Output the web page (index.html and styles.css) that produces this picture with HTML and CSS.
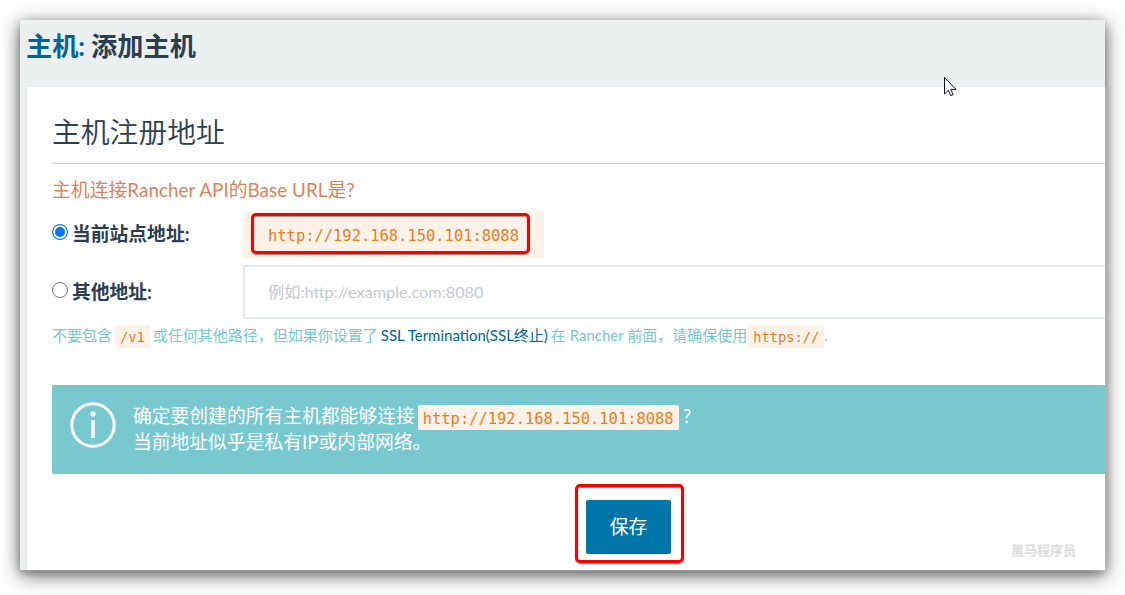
FILE: index.html
```html
<!DOCTYPE html>
<html lang="zh-CN">
<head>
<meta charset="utf-8">
<title>添加主机</title>
<link rel="stylesheet" href="styles.css">
</head>
<body>
<main class="window">
  <h1 class="page-title"><a class="crumb">主机:</a> 添加主机</h1>
  <section class="card">
    <h2 class="heading">主机注册地址</h2>
    <p class="question">主机连接Rancher API的Base URL是?</p>
    <div class="option option-current">
      <label class="choice"><span class="radio radio-on"></span><span class="choice-text">当前站点地址:</span></label>
      <div class="current-url"><code class="url">http://192.168.150.101:8088</code><span class="mark mark-url"></span></div>
    </div>
    <div class="option option-other">
      <label class="choice"><span class="radio"></span><span class="choice-text">其他地址:</span></label>
      <div class="field"><span class="placeholder">例如:http://example.com:8080</span></div>
    </div>
    <p class="hint"><span>不要包含</span><code class="chip chip-path">/v1</code><span>或任何其他路径，但如果你设置了</span><a class="link">SSL Termination(SSL终止)</a><span class="hint-tail">在 Rancher 前面，请确保使用</span><code class="chip chip-https">https://</code><span>.</span></p>
    <div class="notice">
      <svg class="info" viewBox="0 0 46 46" width="46" height="46"><circle cx="23" cy="23" r="21.2" fill="none" stroke="#fff" stroke-width="3"/><circle cx="23" cy="12" r="2.7" fill="#fff"/><path d="M23 18v18" stroke="#fff" stroke-width="3.6"/></svg>
      <div class="notice-text">
        <div class="notice-line">确定要创建的所有主机都能够连接<code class="notice-url">http://192.168.150.101:8088</code><span>?</span></div>
        <div class="notice-line">当前地址似乎是私有IP或内部网络。</div>
      </div>
    </div>
    <div class="actions"><button class="save">保存</button><span class="mark mark-save"></span></div>
  </section>
  <span class="watermark">黑马程序员</span>
  <svg class="cursor" viewBox="0 0 13 20" width="13" height="20"><path d="M.5 .5V17L4.3 13.4L6.8 18.7L9.2 17.7L6.8 12.4H12Z" fill="#fff" stroke="#161622" stroke-width="1"/></svg>
</main>
</body>
</html>
```
FILE: styles.css
```css
* { box-sizing: border-box; }
body {
  margin: 0;
  padding: 20px;
  height: 595px;
  overflow: hidden;
  background: #fff;
  color: #2c3e50;
  font: 18.8px/26px Lato, "Noto Sans CJK SC", sans-serif;
  white-space: nowrap;
}
h1, h2, p { margin: 0; }
code { font-family: "DejaVu Sans Mono", monospace; color: #e67e22; }
.window {
  position: relative;
  display: flex;
  flex-direction: column;
  width: 1085px;
  height: 550px;
  padding-left: 7px;
  background: #ebeff0;
  box-shadow: 0 5px 20px rgba(0, 0, 0, .55), 0 3px 9px rgba(0, 0, 0, .3);
}
.page-title { height: 67px; padding-top: 6px; font-size: 26.2px; line-height: 40px; word-spacing: -.4px; }
.crumb { margin-left: -1px; color: #006591; }
.card { flex: 1; padding: 17px 0 0 25px; background: #fff; border-radius: 2px 0 0; box-shadow: 0 0 2px #dfe3e4; }
.heading { height: 60px; border-bottom: 1px solid #ccc; font-size: 28.8px; font-weight: 350; line-height: 56px; }
.question { height: 47px; padding-top: 13px; color: #d9835b; font-weight: 400; font-size: 18.8px; letter-spacing: .06px; }
.option { display: flex; }
.option-current { height: 54px; }
.choice { display: flex; align-items: center; width: 191px; height: 44px; font-weight: 700; font-size: 18.8px; }
.choice-text { padding-top: 2px; }
.radio { width: 16px; height: 16px; margin: 0 4px 3px 0; border: 1px solid #767676; border-radius: 50%; background: #fff; }
.radio-on { border-color: #0075ff; background: #0075ff; box-shadow: inset 0 0 0 2px #fff; }
.current-url { position: relative; width: 301px; height: 47px; padding: 12px 0 0 25px; background: #fdf1e8; line-height: 26px; }
.url { display: block; font-size: 15.45px; }
.mark { position: absolute; border: 3px solid #f80000; border-radius: 5px; box-shadow: 0 1px 1px #888, inset 0 1px 1px #999; }
.mark-url { left: 8px; top: 2px; width: 279px; height: 41px; }
.option-other { height: 54px; }
.option-other .choice { height: 52px; }
.field { flex: 1; height: 54px; padding: 12px 23px; border: 2px solid #e3e8e8; border-right: 0; border-radius: 2px 0 0 2px; }
.placeholder { display: block; color: #c5c8ce; font-size: 16.25px; }
.hint { display: flex; height: 66px; padding-top: 3px; color: #77c6cd; font-size: 15px; font-weight: 400; }
.chip { height: 23px; margin-top: 3px; padding: 1px 5px 0; border-radius: 2px; background: #fdf1e8; font-size: 13.7px; line-height: 23px; font-weight: 400; }
.chip-path { margin-left: 3px; margin-right: 3px; }
.chip-https { margin-left: 1px; }
.link { margin: 0 3px; color: #006591; font-weight: 400; }
.notice { display: flex; height: 89px; padding: 17px 0 0 18px; border-radius: 2px 0 0 2px; background: #78c8cf; color: #fff; }
.info { display: block; }
.notice-text { margin-left: 17px; }
.notice-line { display: flex; height: 26px; line-height: 28px; }
.notice-url { height: 25px; margin: 3px 4px 0 3px; padding: 2px 5px 0; border-radius: 2px; background: #fdf1e8; font-size: 15.45px; line-height: 25px; }
.actions { position: relative; width: 109px; margin: 11px 0 0 523px; padding: 15px 11px; }
.save { display: block; width: 85px; height: 54px; border: 0; border-radius: 2px; background: #0075a8; color: #fff; font: 18.8px/54px Lato, "Noto Sans CJK SC", sans-serif; font-weight: 400; padding: 0; }
.mark-save { left: 0; top: -1px; width: 109px; height: 79px; }
.watermark { position: absolute; right: 29px; bottom: 7px; color: #ddd; font-size: 13px; font-weight: 900; }
.cursor { position: absolute; left: 924px; top: 57px; }
```
